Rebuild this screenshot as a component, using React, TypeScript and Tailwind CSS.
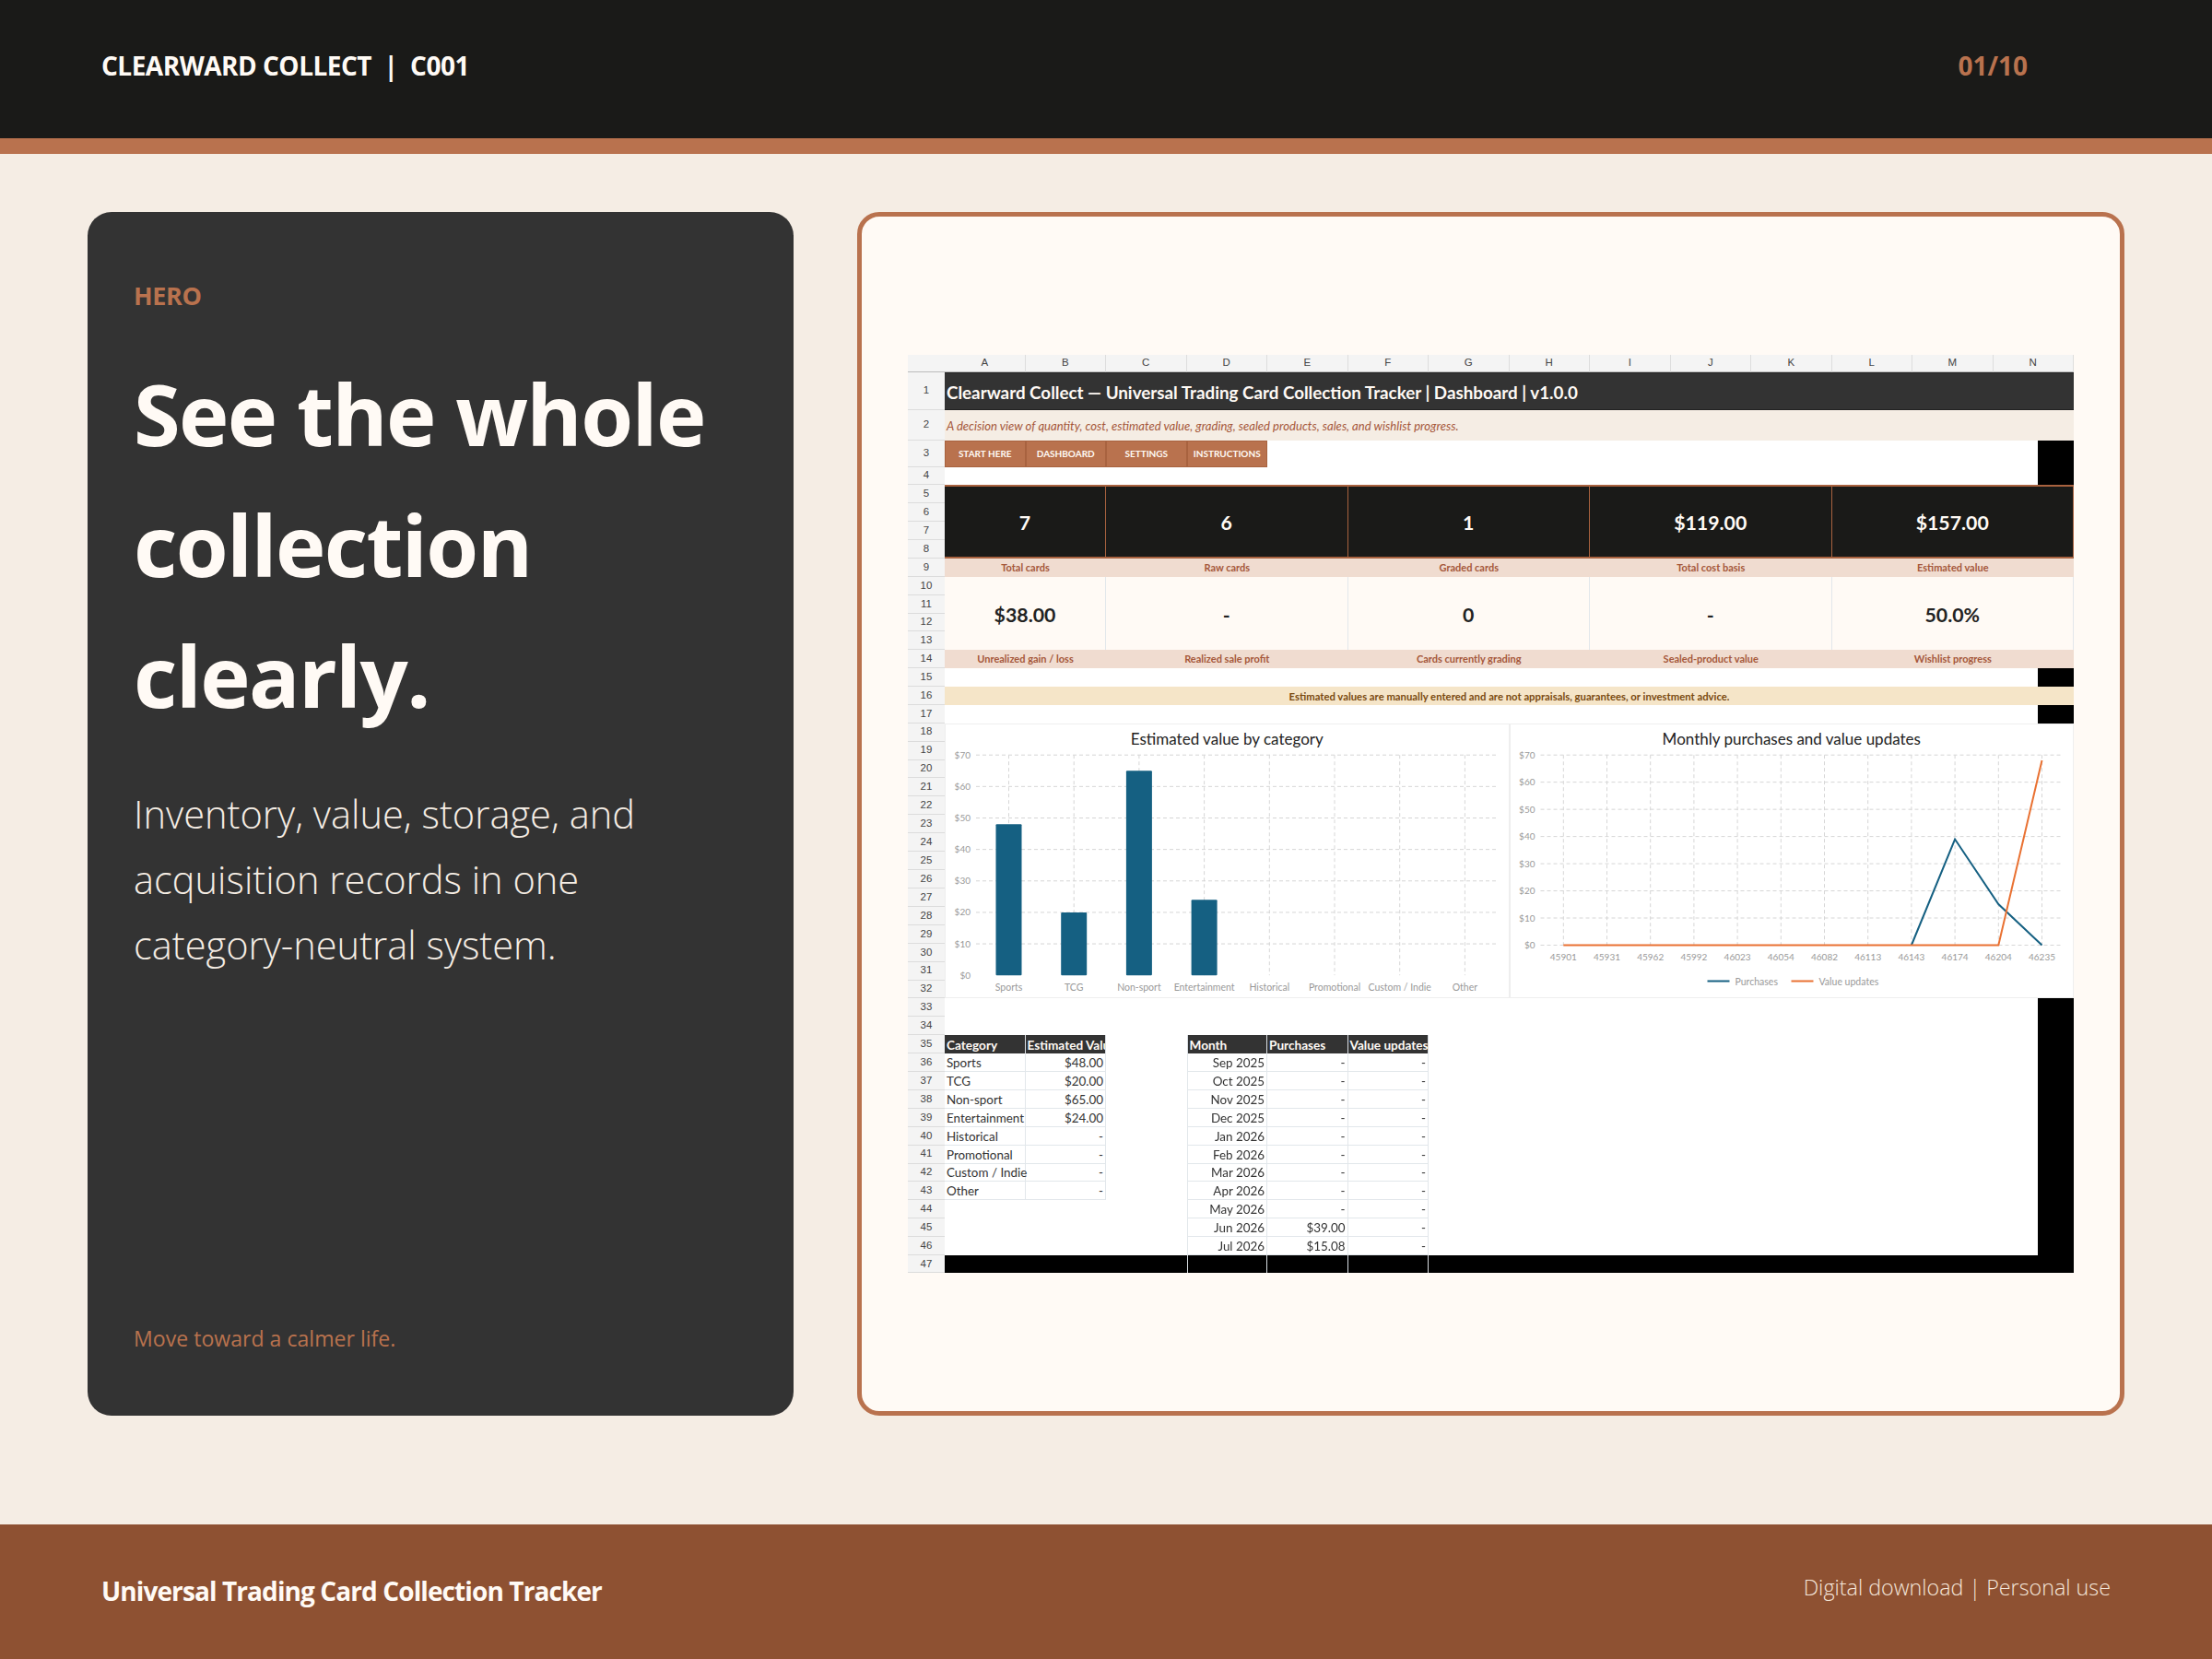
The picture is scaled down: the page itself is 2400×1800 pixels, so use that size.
const kpiTop = [
  { value: '7', label: 'Total cards', col: 'col-[2/4]' },
  { value: '6', label: 'Raw cards', col: 'col-[4/7]' },
  { value: '1', label: 'Graded cards', col: 'col-[7/10]' },
  { value: '$119.00', label: 'Total cost basis', col: 'col-[10/13]' },
  { value: '$157.00', label: 'Estimated value', col: 'col-[13/16]' },
]

const kpiBottom = [
  { value: '$38.00', label: 'Unrealized gain / loss', col: 'col-[2/4]' },
  { value: '-', label: 'Realized sale profit', col: 'col-[4/7]' },
  { value: '0', label: 'Cards currently grading', col: 'col-[7/10]' },
  { value: '-', label: 'Sealed-product value', col: 'col-[10/13]' },
  { value: '50.0%', label: 'Wishlist progress', col: 'col-[13/16]' },
]

const categories = [
  ['Sports', '$48.00', 48],
  ['TCG', '$20.00', 20],
  ['Non-sport', '$65.00', 65],
  ['Entertainment', '$24.00', 24],
  ['Historical', '-', 0],
  ['Promotional', '-', 0],
  ['Custom / Indie', '-', 0],
  ['Other', '-', 0],
] as const

const months = [
  ['Sep 2025', '-', '-'],
  ['Oct 2025', '-', '-'],
  ['Nov 2025', '-', '-'],
  ['Dec 2025', '-', '-'],
  ['Jan 2026', '-', '-'],
  ['Feb 2026', '-', '-'],
  ['Mar 2026', '-', '-'],
  ['Apr 2026', '-', '-'],
  ['May 2026', '-', '-'],
  ['Jun 2026', '$39.00', '-'],
  ['Jul 2026', '$15.08', '-'],
]

const serials = [45901, 45931, 45962, 45992, 46023, 46054, 46082, 46113, 46143, 46174, 46204, 46235]
const purchases = [0, 39, 15.08, 0]
const valueUpdates = [0, 0, 0, 0, 0, 0, 0, 0, 0, 0, 0, 68]
const ticks = [0, 10, 20, 30, 40, 50, 60, 70]

function BarChart() {
  const y = (v: number) => 1057.7 - (v * 239) / 70
  const x = (i: number) => 1094.5 + i * 70.7
  return (
    <div className="col-[2/9] row-[19/34] flex flex-col border border-[#eeeeee] bg-white">
      <div className="flex h-[29px] items-center justify-center pt-[3px] text-[17px] leading-none text-[#222]">Estimated value by category</div>
      <svg viewBox="1026 813.5 612 268" className="h-[268px] w-[612px] overflow-visible">
        {ticks.map((t) => (
          <g key={t}>
            {t > 0 && <line x1={1059} x2={1625} y1={y(t)} y2={y(t)} stroke="#d6d6d6" strokeWidth="1" strokeDasharray="4 3" />}
            <text x={1053} y={y(t) + 3.5} textAnchor="end" fontSize="10" fill="#999">${t}</text>
          </g>
        ))}
        {categories.map((c, i) => (
          <g key={c[0]}>
            <line x1={x(i)} x2={x(i)} y1={818.7} y2={1057.7} stroke="#d6d6d6" strokeWidth="1" strokeDasharray="4 3" />
            <text x={x(i)} y={1074} textAnchor="middle" fontSize="10.5" fill="#999">{c[0]}</text>
            {c[2] > 0 && <rect x={x(i) - 14} y={y(c[2])} width="28" height={1057.7 - y(c[2])} rx="1" fill="#156082" />}
          </g>
        ))}
      </svg>
    </div>
  )
}

function LineChart() {
  const y = (v: number) => 1025 - (v * 206.3) / 70
  const x = (i: number) => 1695.8 + i * 47.2
  return (
    <div className="col-[9/16] row-[19/34] flex flex-col border border-[#eeeeee] bg-white">
      <div className="flex h-[29px] items-center justify-center pt-[3px] text-[17px] leading-none text-[#222]">Monthly purchases and value updates</div>
      <svg viewBox="1638.5 813.5 612 268" className="h-[268px] w-[612px] overflow-visible">
        {ticks.map((t) => (
          <g key={t}>
            <line x1={1671} x2={2238} y1={y(t)} y2={y(t)} stroke="#d6d6d6" strokeWidth="1" strokeDasharray="4 3" />
            <text x={1665} y={y(t) + 3.5} textAnchor="end" fontSize="10" fill="#999">${t}</text>
          </g>
        ))}
        {serials.map((s, i) => (
          <g key={s}>
            <line x1={x(i)} x2={x(i)} y1={818.7} y2={1025} stroke="#d6d6d6" strokeWidth="1" strokeDasharray="4 3" />
            <text x={x(i)} y={1041} textAnchor="middle" fontSize="10" fill="#999">{s}</text>
          </g>
        ))}
        <polyline points={purchases.map((v, i) => `${x(i + 8)},${y(v)}`).join(' ')} fill="none" stroke="#156082" strokeWidth="2" />
        <polyline points={valueUpdates.map((v, i) => `${x(i)},${y(v)}`).join(' ')} fill="none" stroke="#e97132" strokeWidth="2" />
        <line x1={1852} x2={1876} y1={1064} y2={1064} stroke="#156082" strokeWidth="2" />
        <text x={1882} y={1068} fontSize="10.5" fill="#999">Purchases</text>
        <line x1={1943} x2={1967} y1={1064} y2={1064} stroke="#e97132" strokeWidth="2" />
        <text x={1973} y={1068} fontSize="10.5" fill="#999">Value updates</text>
      </svg>
    </div>
  )
}

function Sheet() {
  const rowHead = 'flex items-center justify-center border-b border-[#dcdcdc] bg-[#f4f4f4] font-["Liberation_Sans",sans-serif] text-[11.5px] text-[#444]'
  const tableCell = 'flex items-end whitespace-nowrap border-b border-r border-[#e2e7eb] px-[2px] text-[13.4px] leading-[18px] text-[#333]'
  const tableHead = 'flex items-end overflow-hidden whitespace-nowrap border-r border-[#d8dde2] bg-[#333333] px-[2px] text-[13.6px] font-bold leading-[18px] text-[#fffaf5]'
  const blackN = 'col-[15] w-[39px] justify-self-end bg-black'

  return (
    <div className="grid w-[1265px] grid-cols-[40px_repeat(14,87.5px)] grid-rows-[19px_41px_33.5px_28.5px_19px_repeat(4,20px)_20.5px_repeat(4,19.75px)_20px_20px_19.5px_20px_repeat(15,19.93px)_repeat(14,19.9px)_19.4px] bg-white font-['Lato',sans-serif] blur-[0.35px]">
      {/* column letters */}
      <div className="col-[1] row-[1] border-b border-[#bbbbbb] bg-[#f4f4f4]" />
      {'ABCDEFGHIJKLMN'.split('').map((c) => (
        <div key={c} className="row-[1] flex items-center justify-center border-b border-r border-[#bbbbbb] border-r-[#dddddd] bg-[#f4f4f4] font-['Liberation_Sans',sans-serif] text-[11.5px] text-[#444]">
          {c}
        </div>
      ))}

      {/* row numbers */}
      {Array.from({ length: 47 }, (_, i) => (
        <div key={i} className={rowHead} style={{ gridColumn: 1, gridRow: i + 2 }}>
          {i + 1}
        </div>
      ))}

      <div className="col-[2/16] row-[2] flex items-center border-y border-[#222] bg-[#333333] pl-[2px] pt-[3px] text-[18.8px] font-bold text-[#fffaf5]">
        Clearward Collect — Universal Trading Card Collection Tracker | Dashboard | v1.0.0
      </div>
      <div className="col-[2/16] row-[3] flex items-center bg-[#f5ede4] pl-[2px] pt-[3px] text-[13.1px] italic text-[#a5573a]">
        A decision view of quantity, cost, estimated value, grading, sealed products, sales, and wishlist progress.
      </div>
      {['START HERE', 'DASHBOARD', 'SETTINGS', 'INSTRUCTIONS'].map((t) => (
        <div key={t} className="row-[4] flex items-center justify-center whitespace-nowrap border border-[#a8623f] bg-[#b9724e] text-[10px] font-bold text-[#fffaf5]">
          {t}
        </div>
      ))}
      <div className={`${blackN} row-[4/6]`} />

      {kpiTop.map((k) => (
        <div key={k.label} className={`${k.col} row-[6/10] flex items-center justify-center border-x border-y-2 border-[#a8623f] border-l-0 bg-[#1a1a18] pt-[5px] text-[21.3px] font-bold text-[#fffaf5]`}>
          {k.value}
        </div>
      ))}
      {kpiTop.map((k) => (
        <div key={k.label} className={`${k.col} row-[10] flex items-center justify-center bg-[#f0dcd0] text-[11px] font-bold text-[#a5573a]`}>
          {k.label}
        </div>
      ))}
      {kpiBottom.map((k) => (
        <div key={k.label} className={`${k.col} row-[11/15] flex items-center justify-center border-r border-[#e2e7eb] bg-[#fffaf5] pt-[5px] text-[21.3px] font-bold text-[#222]`}>
          {k.value}
        </div>
      ))}
      {kpiBottom.map((k) => (
        <div key={k.label} className={`${k.col} row-[15] flex items-center justify-center bg-[#f0dcd0] text-[11px] font-bold text-[#a5573a]`}>
          {k.label}
        </div>
      ))}
      <div className={`${blackN} row-[16]`} />
      <div className="col-[2/16] row-[17] flex items-center justify-center bg-[#f5e5c8] pt-[3px] text-[11.3px] font-bold text-[#7a4a10]">
        Estimated values are manually entered and are not appraisals, guarantees, or investment advice.
      </div>
      <div className={`${blackN} row-[18]`} />

      <BarChart />
      <LineChart />

      {/* data tables */}
      <div className={`${tableHead} col-[2] row-[36]`}>Category</div>
      <div className={`${tableHead} col-[3] row-[36]`}>Estimated Value</div>
      {categories.map((c, i) => (
        <div key={c[0]} className="contents">
          <div className={tableCell} style={{ gridColumn: 2, gridRow: 37 + i }}>{c[0]}</div>
          <div className={`${tableCell} justify-end`} style={{ gridColumn: 3, gridRow: 37 + i }}>{c[1]}</div>
        </div>
      ))}
      <div className={`${tableHead} col-[5] row-[36] border-l`}>Month</div>
      <div className={`${tableHead} col-[6] row-[36]`}>Purchases</div>
      <div className={`${tableHead} col-[7] row-[36]`}>Value updates</div>
      {months.map((m, i) => (
        <div key={m[0]} className="contents">
          {m.map((v, j) => (
            <div key={j} className={`${tableCell} justify-end ${j === 0 ? 'border-l' : ''}`} style={{ gridColumn: 5 + j, gridRow: 37 + i }}>{v}</div>
          ))}
        </div>
      ))}

      <div className={`${blackN} row-[34/49]`} />
      <div className="col-[2/5] row-[48] bg-black" />
      <div className="col-[5] row-[48] border-x border-[#d8dde2] bg-black" />
      <div className="col-[6] row-[48] border-r border-[#d8dde2] bg-black" />
      <div className="col-[7] row-[48] border-r border-[#d8dde2] bg-black" />
      <div className="col-[8/16] row-[48] bg-black" />
    </div>
  )
}

export default function App() {
  return (
    <div className="flex h-[1800px] w-[2400px] flex-col bg-[#f5ede4] font-['Open_Sans',sans-serif]">
      <header className="flex h-[150px] items-center justify-between bg-[#1a1a18] pb-[9px] pl-[110px] pr-[200px] text-[28px] font-bold tracking-[-0.5px] text-[#fffaf5]">
        <span className="whitespace-pre">CLEARWARD COLLECT  |  C001</span>
        <span className="tracking-normal text-[#b9724e]">01/10</span>
      </header>
      <div className="h-[17px] bg-[#b9724e]" />

      <main className="flex flex-1 gap-[69px] px-[95px] pt-[63px]">
        <section className="flex h-[1306px] w-[766px] flex-col rounded-[26px] bg-[#333333] pb-[68px] pl-[50px] pt-[73px]">
          <div className="text-[27px] font-bold leading-[36px] tracking-[-0.4px] text-[#b9724e]">HERO</div>
          <h1 className="mt-[39px] text-[92px] font-bold leading-[142px] tracking-[-1.6px] text-[#fffaf5]">
            See the whole
            <br />
            collection
            <br />
            clearly.
          </h1>
          <p className="mt-[44px] text-[41.6px] font-[350] leading-[71px] text-[#f5ede4]">
            Inventory, value, storage, and
            <br />
            acquisition records in one
            <br />
            category-neutral system.
          </p>
          <div className="mt-auto text-[23.1px] leading-[32px] text-[#b9724e]">Move toward a calmer life.</div>
        </section>

        <section className="flex h-[1306px] flex-1 items-center justify-center rounded-[24px] border-[5px] border-[#b9724e] bg-[#fffaf5]">
          <Sheet />
        </section>
      </main>

      <footer className="flex h-[146px] items-center justify-between bg-[#8e5132] px-[110px] text-[#fffaf5]">
        <span className="-translate-y-[1px] text-[28px] font-bold tracking-[-0.9px]">Universal Trading Card Collection Tracker</span>
        <span className="-translate-y-[5px] text-[23.3px] font-[350] text-[#f5e6da]">Digital download | Personal use</span>
      </footer>
    </div>
  )
}
